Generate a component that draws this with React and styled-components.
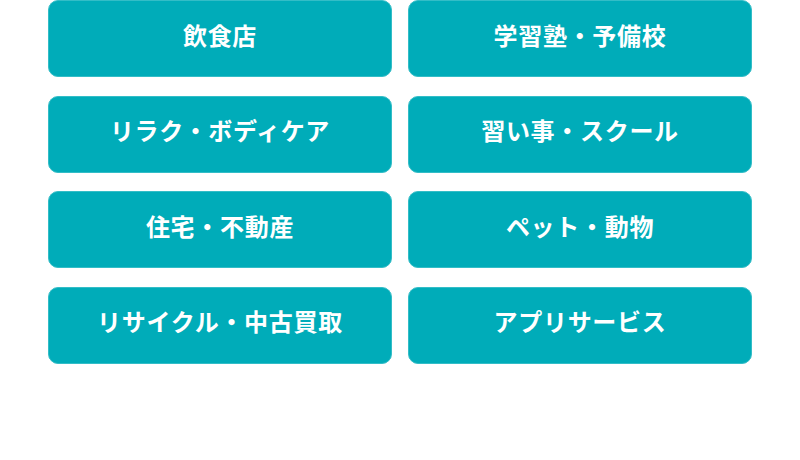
import styled, { createGlobalStyle } from "styled-components";

const GlobalStyle = createGlobalStyle`
  html, body {
    margin: 0;
    padding: 0;
    background: #ffffff;
  }
  body {
    font-family: "Noto Sans CJK JP", "Noto Sans", sans-serif;
  }
`;

const Wrapper = styled.div`
  width: 800px;
  height: 460px;
  box-sizing: border-box;
  padding: 0 48px;
`;

const Grid = styled.ul`
  list-style: none;
  margin: 0;
  padding: 0;
  display: grid;
  grid-template-columns: 1fr 1fr;
  column-gap: 16px;
  row-gap: 18.5px;
`;

const Item = styled.li`
  display: flex;
`;

const CategoryButton = styled.a`
  flex: 1;
  height: 77px;
  box-sizing: border-box;
  padding-bottom: 9px;
  display: flex;
  align-items: center;
  justify-content: center;
  background: #00acb9;
  border: 1px solid #33bdc7;
  border-radius: 10px;
  color: #ffffff;
  font-weight: 700;
  font-size: 24px;
  letter-spacing: 0.7px;
  text-decoration: none;
  cursor: pointer;
`;

const categories = [
  "飲食店",
  "学習塾・予備校",
  "リラク・ボディケア",
  "習い事・スクール",
  "住宅・不動産",
  "ペット・動物",
  "リサイクル・中古買取",
  "アプリサービス",
];

const App = () => {
  return (
    <Wrapper>
      <GlobalStyle />
      <Grid>
        {categories.map((label) => (
          <Item key={label}>
            <CategoryButton href="#">{label}</CategoryButton>
          </Item>
        ))}
      </Grid>
    </Wrapper>
  );
};

export default App;
